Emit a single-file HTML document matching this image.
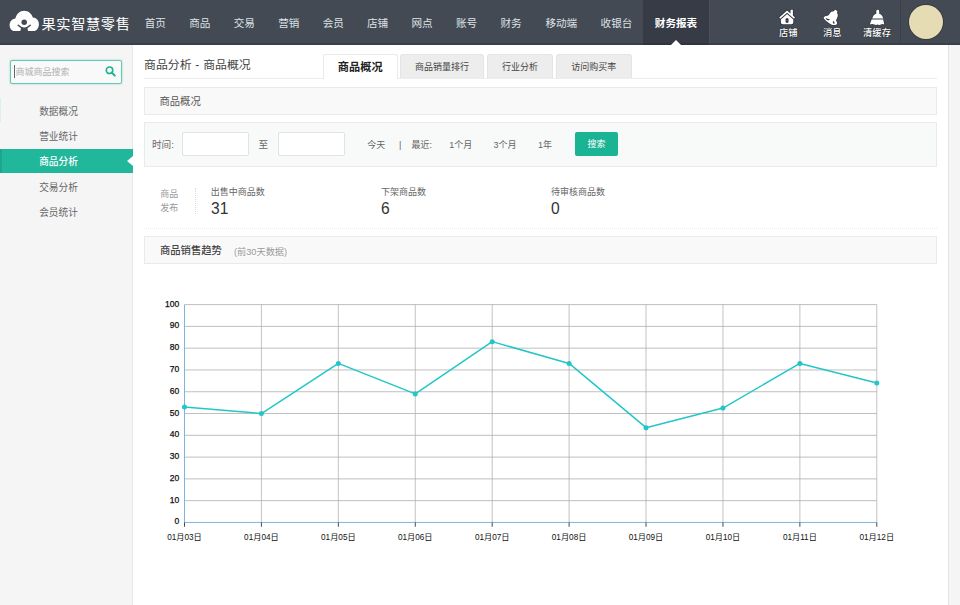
<!DOCTYPE html>
<html lang="zh-CN">
<head>
<meta charset="utf-8">
<title>果实智慧零售 - 商品分析</title>
<style>
*{box-sizing:border-box;margin:0;padding:0}
html,body{width:960px;height:605px;overflow:hidden;background:#f5f5f5}
body{font-family:"Liberation Sans","Noto Sans CJK SC",sans-serif;font-size:12px;color:#555;position:relative}
.abs{position:absolute}
/* header */
#hd{position:absolute;left:0;top:0;width:960px;height:45px;background:#434a54;border-bottom:2px solid #3a404a}
#logo-t{position:absolute;left:41.5px;top:12.5px;font-size:14.2px;line-height:22px;color:#fff;letter-spacing:0.65px;white-space:nowrap;font-weight:400}
.nav{position:absolute;top:1.4px;height:45px;line-height:45px;color:#dfe3e8;font-size:10.6px;white-space:nowrap;transform:translateX(-50%)}
#nav-act{position:absolute;left:643px;top:0;width:65.5px;height:45px;background:#363b45;border-bottom:2px solid #2f343d}
#nav-act-r{position:absolute;left:708.5px;top:0;width:1.2px;height:43px;background:#48505b}
#nav-act-t{position:absolute;left:676px;top:1.4px;height:45px;line-height:45px;color:#fff;font-weight:bold;font-size:10.6px;white-space:nowrap;transform:translateX(-50%)}
#nav-tri{position:absolute;left:671px;top:40px;width:0;height:0;border-left:5px solid transparent;border-right:5px solid transparent;border-bottom:5px solid #fff}
.ric{position:absolute;top:26.6px;font-size:9.3px;line-height:12px;color:#fff;font-weight:500;white-space:nowrap;transform:translateX(-50%);text-shadow:0 0 1px #1c2026,0 0 1px #1c2026}
#sep{position:absolute;left:900px;top:0;width:1px;height:43px;background:#3a4049}
#ava{position:absolute;left:909px;top:5px;width:34px;height:34px;border-radius:50%;background:#e6dcb4;box-shadow:0 0 0 1px #363c46}
/* sidebar */
#sb{position:absolute;left:0;top:45px;width:133px;height:560px;background:#f5f5f5;border-right:1px solid #e7e7e7}
#srch{position:absolute;left:10px;top:59.5px;width:112px;height:24.5px;border:1px solid #63c9b3;border-radius:2px;background:#f9f9f9;box-shadow:0 0 2px rgba(26,179,148,.5)}
#srch-t{position:absolute;left:15.5px;top:64.5px;font-size:9px;line-height:14px;color:#b0b0b0;white-space:nowrap}
#caret{position:absolute;left:14px;top:65px;width:1px;height:13px;background:#666}
.mi{position:absolute;left:39.2px;font-size:9.7px;line-height:16px;color:#666;white-space:nowrap}
#mact{position:absolute;left:0;top:149.2px;width:133px;height:23.6px;background:#20b79b}
#mact-l{position:absolute;left:0;top:149.2px;width:2px;height:23.6px;background:#1ca68c}
#mhint{position:absolute;left:0;top:98px;width:0.8px;height:24px;background:#dcefeb}
#mtri{position:absolute;left:127px;top:156px;width:0;height:0;border-top:5px solid transparent;border-bottom:5px solid transparent;border-right:6px solid #fff}
/* main */
#main{position:absolute;left:133px;top:45px;width:816px;height:560px;background:#fff;border-right:1px solid #e4e4e4}
#ttl{position:absolute;left:144px;top:56px;font-size:11.9px;line-height:18px;color:#444;white-space:nowrap;word-spacing:0.5px}
#tabline{position:absolute;left:144px;top:78px;width:793px;height:1px;background:#ededed}
.tab{position:absolute;top:54.3px;height:23.7px;line-height:25px;font-size:9px;color:#444;text-align:center;background:#ededed;border:1px solid #e4e4e4;border-bottom:none;border-radius:3px 3px 0 0;white-space:nowrap}
.tab.on{background:#fff;color:#222;font-weight:bold;font-size:11.2px;height:24.7px;border-color:#e9e9e9}
.pnl{position:absolute;left:144px;width:793.4px;background:#f9f9f9;border:1px solid #eaeaea}
.pt{position:absolute;line-height:16px;color:#555;white-space:nowrap}
.inp{position:absolute;top:132px;width:67px;height:24px;background:#fff;border:1px solid #e3e3e3;border-radius:2px}
.ft{position:absolute;top:136.7px;font-size:9px;line-height:16px;color:#666;white-space:nowrap}
#btn{position:absolute;left:575px;top:132.2px;width:42.8px;height:23.6px;background:#1ab394;border-radius:2px;color:#fff;font-size:9px;line-height:24px;text-align:center}
.sl{position:absolute;font-size:9px;line-height:14px;color:#666;white-space:nowrap}
.sv{position:absolute;top:199px;font-size:15.6px;line-height:20px;color:#333;white-space:nowrap}
#dot{position:absolute;left:144px;top:228px;width:793px;height:0;border-top:1px dotted #ebebeb}
</style>
</head>
<body>
<div id="sb"></div>
<div id="main"></div>

<div id="hd">
  <svg class="abs" style="left:8px;top:9px" width="33" height="24" viewBox="8 9 33 24">
    <path d="M14.6 31.1 C11.4 31.1 9.6 28.4 9.6 25.1 C9.6 21.8 12 19 15.4 18.6 C16.4 14 19.8 10.8 24.2 10.8 C28.4 10.8 31.6 13.6 32.8 17.6 C36.4 17.6 38.9 20.6 38.9 24.3 C38.9 28 36.8 31.1 33.4 31.1 Z" fill="#fff"/>
    <circle cx="24.2" cy="22.3" r="2.75" fill="#434a54"/>
    <path d="M18.2 25.3 Q24.2 31.4 30.2 25.3" fill="none" stroke="#434a54" stroke-width="1.5" stroke-linecap="round"/>
    <path d="M21 27.6 Q24.2 29.2 27.4 27.6 Q27.5 29.8 28.4 31.4 H20 Q20.9 29.8 21 27.6 Z" fill="#434a54"/>
  </svg>
  <div id="logo-t">果实智慧零售</div>
  <div class="nav" style="left:155.25px">首页</div>
  <div class="nav" style="left:199.75px">商品</div>
  <div class="nav" style="left:244.25px">交易</div>
  <div class="nav" style="left:288.75px">营销</div>
  <div class="nav" style="left:333.25px">会员</div>
  <div class="nav" style="left:377.6px">店铺</div>
  <div class="nav" style="left:422.1px">网点</div>
  <div class="nav" style="left:466.6px">账号</div>
  <div class="nav" style="left:511.1px">财务</div>
  <div class="nav" style="left:561.3px">移动端</div>
  <div class="nav" style="left:616.5px">收银台</div>
  <div id="nav-act"></div><div id="nav-act-r"></div>
  <div id="nav-act-t">财务报表</div>
  <div id="nav-tri"></div>

  <!-- shop icon -->
  <svg class="abs" style="left:776px;top:7px" width="24" height="20" viewBox="776 7 24 20">
    <g stroke="#262b33" stroke-width="1.6" stroke-linejoin="round" fill="#262b33" opacity=".75">
      <path d="M787.1 10.4 L779.2 17.5 L780.3 18.8 L787.1 12.7 L793.9 18.8 L795 17.5 L792.9 15.6 V9.8 H790.5 V13.5 Z"/>
      <path d="M787.1 13.9 L780.9 19.4 V22.4 Q780.9 24.2 782.7 24.2 H791.5 Q793.3 24.2 793.3 22.4 V19.4 Z"/>
    </g>
    <path d="M787.1 10.4 L779.2 17.5 L780.3 18.8 L787.1 12.7 L793.9 18.8 L795 17.5 L792.9 15.6 V9.8 H790.5 V13.5 Z" fill="#fff"/>
    <path d="M787.1 13.9 L780.9 19.4 V22.4 Q780.9 24.2 782.7 24.2 H791.5 Q793.3 24.2 793.3 22.4 V19.4 Z" fill="#fff"/>
    <rect x="785.6" y="18.2" width="2.9" height="4.5" rx="0.8" fill="#2b3038"/><rect x="785.6" y="20.2" width="2.9" height="0.5" fill="#7d838b"/>
  </svg>
  <div class="ric" style="left:788.3px">店铺</div>
  <!-- message icon -->
  <svg class="abs" style="left:820px;top:7px" width="22" height="21" viewBox="820 7 22 21">
    <path id="bellp" d="M835.76 9.88C836.23 10.01 837.12 10.67 837.33 11.14C837.54 11.61 836.93 12.08 837.01 12.71C837.09 13.34 837.72 14.17 837.80 14.91C837.88 15.64 837.72 16.32 837.48 17.11C837.25 17.89 836.62 18.99 836.38 19.62C836.15 20.24 835.97 20.40 836.07 20.87C836.18 21.34 836.88 21.92 837.01 22.44C837.14 22.97 837.17 23.57 836.86 24.01C836.54 24.46 835.78 24.93 835.13 25.11C834.47 25.29 833.72 25.29 832.93 25.11C832.15 24.93 831.36 24.56 830.42 24.01C829.48 23.46 828.27 22.60 827.28 21.81C826.29 21.03 825.06 19.98 824.45 19.30C823.85 18.62 823.67 18.18 823.67 17.73C823.67 17.29 823.85 16.95 824.45 16.63C825.06 16.32 826.55 16.14 827.28 15.85C828.01 15.56 828.38 15.38 828.85 14.91C829.32 14.44 829.58 13.57 830.11 13.02C830.63 12.47 831.36 11.92 831.99 11.61C832.62 11.30 833.45 11.35 833.87 11.14C834.29 10.93 834.19 10.56 834.50 10.35C834.81 10.15 835.29 9.75 835.76 9.88Z" fill="#fff" stroke="#2a2f37" stroke-width="1.1" stroke-opacity=".7" paint-order="stroke"/>
    <path d="M825.4 18.1 L830.1 19.5 L828.3 20.6 Q826.6 20.1 825.4 18.1 Z" fill="#2b3038"/>
    <ellipse cx="833.7" cy="22.5" rx="0.75" ry="1.25" transform="rotate(-25 833.7 22.5)" fill="#2b3038"/>
  </svg>
  <div class="ric" style="left:832.3px">消息</div>
  <!-- clear cache icon -->
  <svg class="abs" style="left:866px;top:7px" width="23" height="21" viewBox="866 7 23 21">
    <g fill="#fff" stroke="#2a2f37" stroke-width="1.1" stroke-opacity=".7" paint-order="stroke">
      <path d="M876.3 11.2 Q876.3 9.8 877.75 9.8 Q879.2 9.8 879.2 11.2 V13.8 C881.2 14.2 882.6 15.8 883.0 18.0 H872.5 C872.9 15.8 874.3 14.2 876.3 13.8 Z"/>
      <path d="M871.6 19.5 H883.2 L884.3 24.4 Q882.6 23.8 881 24.5 Q879.4 25.2 877.6 24.6 Q875.8 25.2 874.2 24.5 Q872.6 23.8 869.8 24.4 Z"/>
    </g>
    <rect x="872.2" y="18.1" width="11.1" height="1.3" fill="#a4a9b0"/>
  </svg>
  <div class="ric" style="left:877px">清缓存</div>
  <div id="sep"></div>
  <div id="ava"></div>
</div>

<!-- sidebar -->
<div id="srch"></div>
<div id="caret"></div>
<div id="srch-t">商城商品搜索</div>
<svg class="abs" style="left:104px;top:65px" width="14" height="14" viewBox="0 0 14 14">
  <circle cx="5.5" cy="5.3" r="3.25" fill="none" stroke="#1ab394" stroke-width="1.6"/>
  <path d="M8 7.8 L10.8 10.6" stroke="#1ab394" stroke-width="2" stroke-linecap="round"/>
</svg>
<div id="mhint"></div>
<div class="mi" style="top:103.5px">数据概况</div>
<div class="mi" style="top:129px">营业统计</div>
<div id="mact"></div><div id="mact-l"></div><div id="mtri"></div>
<div class="mi" style="top:153.5px;color:#fff;font-weight:500">商品分析</div>
<div class="mi" style="top:179.7px;">交易分析</div>
<div class="mi" style="top:204.9px">会员统计</div>

<!-- main -->
<div id="ttl">商品分析 - 商品概况</div>
<div id="tabline"></div>
<div class="tab on" style="left:322.8px;width:74.9px">商品概况</div>
<div class="tab" style="left:400.1px;width:84px">商品销量排行</div>
<div class="tab" style="left:487.4px;width:65.4px">行业分析</div>
<div class="tab" style="left:556px;width:75.7px">访问购买率</div>

<div class="pnl" style="top:87.1px;height:28px"></div>
<div class="pt" style="left:159.5px;top:93.8px;font-size:10.3px">商品概况</div>

<div class="pnl" style="top:122px;height:44.6px;background:#f8f9f9"></div>
<div class="ft" style="left:152px;font-size:9.6px">时间:</div>
<div class="inp" style="left:181.6px"></div>
<div class="ft" style="left:258.6px;font-size:9.6px">至</div>
<div class="inp" style="left:278px"></div>
<div class="ft" style="left:367.3px">今天</div>
<div class="ft" style="left:399px">|</div>
<div class="ft" style="left:411.6px">最近:</div>
<div class="ft" style="left:449.2px">1个月</div>
<div class="ft" style="left:493.6px">3个月</div>
<div class="ft" style="left:538px">1年</div>
<div id="btn">搜索</div>

<div class="sl" style="left:160.3px;top:186.8px;color:#999">商品</div>
<div class="sl" style="left:160.3px;top:200.6px;color:#999">发布</div>
<div class="abs" style="left:195px;top:187.5px;width:0;height:26.5px;border-left:1px dotted #dcdcdc"></div>
<div class="sl" style="left:210.8px;top:185.2px">出售中商品数</div>
<div class="sv" style="left:211px">31</div>
<div class="sl" style="left:381px;top:185.2px">下架商品数</div>
<div class="sv" style="left:381px">6</div>
<div class="sl" style="left:551px;top:185.2px">待审核商品数</div>
<div class="sv" style="left:551px">0</div>
<div id="dot"></div>

<div class="pnl" style="top:236.2px;height:28px"></div>
<div class="pt" style="left:160px;top:243.4px;font-size:10.3px;font-weight:500;color:#444">商品销售趋势</div>
<div class="pt" style="left:234px;top:243.6px;font-size:9.2px;color:#999">(前30天数据)</div>

<!-- chart -->
<svg class="abs" style="left:133px;top:280px" width="815" height="325" viewBox="133 280 815 325" font-family="'Liberation Sans','Noto Sans CJK SC',sans-serif">
  <path d="M184.50 304.60H876.80M184.50 326.39H876.80M184.50 348.17H876.80M184.50 369.96H876.80M184.50 391.74H876.80M184.50 413.53H876.80M184.50 435.31H876.80M184.50 457.10H876.80M184.50 478.88H876.80M184.50 500.67H876.80" stroke="#bfbfbf" stroke-width="1" fill="none"/>
  <path d="M261.42 304.60V522.45M338.34 304.60V522.45M415.27 304.60V522.45M492.19 304.60V522.45M569.11 304.60V522.45M646.03 304.60V522.45M722.96 304.60V522.45M799.88 304.60V522.45M876.80 304.60V522.45" stroke="#aeaeae" stroke-width="0.75" fill="none"/>
  <path d="M184.5 304.6V522.45M184.5 522.45H876.8" stroke="#7fb4e0" stroke-width="1" fill="none"/>
  <path d="M184.50 522.45V526.75M261.42 522.45V526.75M338.34 522.45V526.75M415.27 522.45V526.75M492.19 522.45V526.75M569.11 522.45V526.75M646.03 522.45V526.75M722.96 522.45V526.75M799.88 522.45V526.75M876.80 522.45V526.75" stroke="#333" stroke-width="0.9" fill="none"/>
  <polyline fill="none" stroke="#23c6c8" stroke-width="1.5" stroke-linejoin="round" points="184.50,406.99 261.42,413.53 338.34,363.42 415.27,393.92 492.19,341.63 569.11,363.42 646.03,427.69 722.96,408.08 799.88,363.42 876.80,383.03"/>
  <g fill="#23c6c8"><circle cx="184.50" cy="406.99" r="2.5"/><circle cx="261.42" cy="413.53" r="2.5"/><circle cx="338.34" cy="363.42" r="2.5"/><circle cx="415.27" cy="393.92" r="2.5"/><circle cx="492.19" cy="341.63" r="2.5"/><circle cx="569.11" cy="363.42" r="2.5"/><circle cx="646.03" cy="427.69" r="2.5"/><circle cx="722.96" cy="408.08" r="2.5"/><circle cx="799.88" cy="363.42" r="2.5"/><circle cx="876.80" cy="383.03" r="2.5"/></g>
  <g font-size="8.5" fill="#111" stroke="#111" stroke-width="0.25" text-anchor="end"><text x="179.2" y="306.60">100</text><text x="179.2" y="328.39">90</text><text x="179.2" y="350.17">80</text><text x="179.2" y="371.96">70</text><text x="179.2" y="393.74">60</text><text x="179.2" y="415.53">50</text><text x="179.2" y="437.31">40</text><text x="179.2" y="459.10">30</text><text x="179.2" y="480.88">20</text><text x="179.2" y="502.67">10</text><text x="179.2" y="524.45">0</text></g>
  <g font-size="8.2" fill="#111" text-anchor="middle"><text x="184.50" y="540.1">01月03日</text><text x="261.42" y="540.1">01月04日</text><text x="338.34" y="540.1">01月05日</text><text x="415.27" y="540.1">01月06日</text><text x="492.19" y="540.1">01月07日</text><text x="569.11" y="540.1">01月08日</text><text x="646.03" y="540.1">01月09日</text><text x="722.96" y="540.1">01月10日</text><text x="799.88" y="540.1">01月11日</text><text x="876.80" y="540.1">01月12日</text></g>
</svg>
</body>
</html>
